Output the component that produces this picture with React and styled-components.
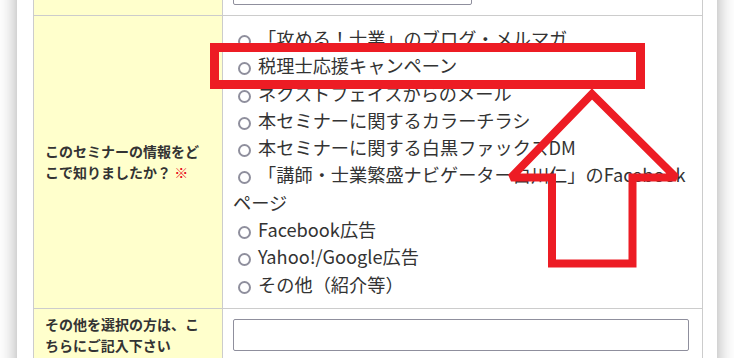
import React from "react";
import styled, { createGlobalStyle } from "styled-components";

const GlobalStyle = createGlobalStyle`
  html, body {
    margin: 0;
    padding: 0;
    background: #fff;
  }
  body {
    font-family: "Noto Sans CJK JP", "Noto Sans", sans-serif;
    color: #333;
  }
`;

// the screenshot is a scrolled view of the form, so the frame clips the page
const Viewport = styled.div`
  position: relative;
  width: 734px;
  height: 358px;
  overflow: hidden;
`;

const Sheet = styled.div`
  width: 700px;
  margin: -38px auto 0;
  padding: 0 14px 40px 16px;
  box-sizing: border-box;
  background: #fff;
  box-shadow: 0 0 18px rgba(0, 0, 0, 0.35);
`;

const FormTable = styled.table`
  width: 670px;
  border-collapse: collapse;
  table-layout: fixed;
  border: 1px solid #ccc;
`;

const LabelCell = styled.th`
  width: 166px;
  padding: 0 11px;
  background: #ffffcc;
  border: 1px solid #ccc;
  text-align: left;
  vertical-align: middle;
  font-size: 14px;
  font-weight: bold;
  line-height: 21px;
  color: #333;
`;

const Required = styled.span`
  color: #e60012;
`;

const ValueCell = styled.td`
  padding: ${(p) => (p.$list ? "9px 10px 10px" : "10px")};
  border: 1px solid #ccc;
  vertical-align: middle;
  font-size: 18.2px;
  line-height: 27.3px;
  color: #333;
`;

const TextInput = styled.input`
  display: block;
  width: ${(p) => (p.$wide ? "456px" : "239px")};
  height: 32px;
  box-sizing: border-box;
  border: 1px solid #8f8f9d;
  border-radius: 2px;
  background: #fff;
  font-size: 16px;
`;

const Option = styled.label`
  display: block;
`;

const Radio = styled.input`
  appearance: none;
  width: 13px;
  height: 13px;
  margin: 3px 3px 0 5px;
  box-sizing: border-box;
  border: 2px solid #8f8f9d;
  border-radius: 50%;
  background: #fff;
  vertical-align: -2px;
`;

const Annotation = styled.svg`
  position: absolute;
  top: 0;
  left: 0;
  pointer-events: none;
`;

const options = [
  "「攻める！士業」のブログ・メルマガ",
  "税理士応援キャンペーン",
  "ネクストフェイスからのメール",
  "本セミナーに関するカラーチラシ",
  "本セミナーに関する白黒ファックスDM",
  "「講師・士業繁盛ナビゲーター白川仁」のFacebookページ",
  "Facebook広告",
  "Yahoo!/Google広告",
  "その他（紹介等）",
];

export default function App() {
  return (
    <>
      <GlobalStyle />
      <Viewport>
        <Sheet>
          <FormTable>
            <tbody>
              <tr>
                <LabelCell />
                <ValueCell>
                  <TextInput type="text" />
                </ValueCell>
              </tr>
              <tr>
                <LabelCell>
                  このセミナーの情報をどこで知りましたか？ <Required>※</Required>
                </LabelCell>
                <ValueCell $list>
                  {options.map((o) => (
                    <Option key={o}>
                      <Radio type="radio" name="source" /> {o}
                    </Option>
                  ))}
                </ValueCell>
              </tr>
              <tr>
                <LabelCell>その他を選択の方は、こちらにご記入下さい</LabelCell>
                <ValueCell>
                  <TextInput type="text" $wide />
                </ValueCell>
              </tr>
            </tbody>
          </FormTable>
        </Sheet>
        <Annotation width="734" height="358" viewBox="0 0 734 358">
          <rect x="214.5" y="47.5" width="426" height="37" fill="none" stroke="#ed1c24" strokeWidth="9" />
          <polygon
            points="592,94 676,177.5 632.5,177.5 632.5,263.5 552,263.5 552,177.5 511,177.5"
            fill="none"
            stroke="#ed1c24"
            strokeWidth="8"
            strokeLinejoin="miter"
            strokeMiterlimit="2"
          />
        </Annotation>
      </Viewport>
    </>
  );
}
